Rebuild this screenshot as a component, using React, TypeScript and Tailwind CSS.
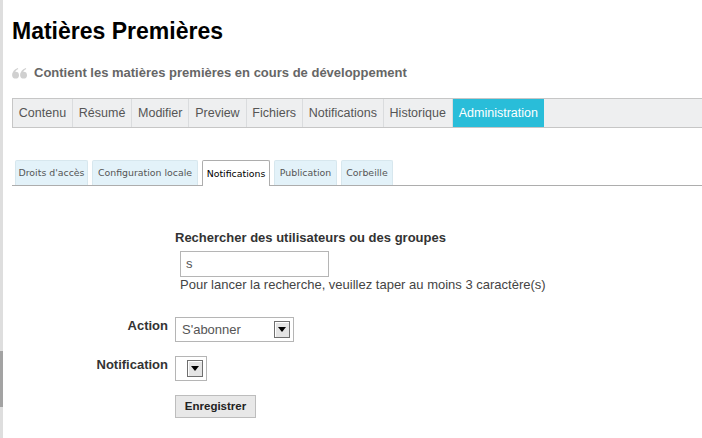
import React from "react";

const navItems = ["Contenu", "Résumé", "Modifier", "Preview", "Fichiers", "Notifications", "Historique"];
const subTabs = [
  { label: "Droits d'accès", w: "w-[73px]" },
  { label: "Configuration locale", w: "w-[106px]" },
  { label: "Notifications", w: "w-[68px]", active: true },
  { label: "Publication", w: "w-[63px]" },
  { label: "Corbeille", w: "w-[52px]" },
];

function SelectArrow() {
  return (
    <div className="flex h-[17px] w-[16px] items-center justify-center border border-[#6f6f6f] bg-[#e4e4e4] shadow-[inset_1px_1px_0_#fff]">
      <svg width="8" height="5" viewBox="0 0 8 5">
        <path d="M0 0 H8 L4 5 Z" fill="#000" />
      </svg>
    </div>
  );
}

function QuoteMark() {
  return (
    <svg width="16" height="11" viewBox="0 0 16 11" className="shrink-0">
      <g fill="#d0d0d0">
        <circle cx="3.6" cy="7.2" r="3.4" />
        <path d="M0.3 7 C0.3 3.8 2.2 1.2 5.8 0 L6.3 1.1 C4.2 2 3.1 3.4 3 5.2 Z" />
        <circle cx="11.6" cy="7.2" r="3.4" />
        <path d="M8.3 7 C8.3 3.8 10.2 1.2 13.8 0 L14.3 1.1 C12.2 2 11.1 3.4 11 5.2 Z" />
      </g>
    </svg>
  );
}

export default function App() {
  return (
    <div className="flex h-[438px] w-[702px] overflow-hidden bg-white" style={{ fontFamily: '"Liberation Sans", Arial, sans-serif' }}>
      <div className="flex w-[3px] shrink-0 flex-col bg-[#dedede]">
        <div className="h-[351px]" />
        <div className="h-[56px] bg-[#a3a3a3]" />
      </div>
      <div className="flex min-w-0 flex-1 flex-col pl-[9px]">
        <h1 className="mt-[17px] text-[23px] font-bold leading-[28px] text-black">Matières Premières</h1>
        <div className="mt-[20px] flex items-center gap-[6px] text-[13px] font-bold leading-[16px] text-[#666]">
          <QuoteMark />
          <span>Contient les matières premières en cours de développement</span>
        </div>
        <div className="mt-[17px] flex h-[30px] border-y border-l border-[#c6c6c6] bg-[#eeeff0] text-[12.5px] text-[#555]">
          {navItems.map((n) => (
            <div key={n} className="flex items-center border-r border-[#dadcde] px-[5.85px]">{n}</div>
          ))}
          <div className="flex items-center bg-[#29bdd9] px-[6px] text-white">Administration</div>
        </div>
        <div
          className="mt-[32px] flex h-[26px] gap-[4px] border-b border-[#adadad] pl-[3px]"
          style={{ fontFamily: '"DejaVu Sans", Verdana, sans-serif' }}
        >
          {subTabs.map((t) => (
            <div
              key={t.label}
              className={
                (t.active
                  ? "relative -mb-px flex items-center justify-center whitespace-nowrap rounded-t-[2px] border border-b-0 border-[#adadad] bg-white pt-[1px] text-[9.4px] text-black "
                  : "flex items-center justify-center whitespace-nowrap rounded-t-[2px] border border-b-0 border-[#d7e7ee] bg-[#e3f2f9] pt-[1px] text-[9.4px] text-[#555] ") + t.w
              }
            >
              {t.label}
            </div>
          ))}
        </div>
        <div className="mt-[44px] grid grid-cols-[156px_1fr] gap-x-[7px] text-[13px] text-[#444]">
          <div />
          <div className="flex flex-col">
            <div className="font-bold leading-[16px] text-[#333]">Rechercher des utilisateurs ou des groupes</div>
            <div className="ml-[5px] mt-[5px] flex h-[26px] w-[149px] items-center border border-[#b5b5b5] px-[5px] text-[#555]">s</div>
            <div className="ml-[5px] leading-[16px] text-[#444]">Pour lancer la recherche, veuillez taper au moins 3 caractère(s)</div>
          </div>
          <div className="mt-[24px] pt-[1px] text-right font-bold leading-[16px] text-[#333]">Action</div>
          <div className="mt-[24px]">
            <div className="flex h-[25px] w-[119px] items-center justify-between border border-[#b5b5b5] pl-[6px] pr-[3px] text-[#555]">
              <span>S'abonner</span>
              <SelectArrow />
            </div>
          </div>
          <div className="mt-[14px] pt-[1px] text-right font-bold leading-[16px] text-[#333]">Notification</div>
          <div className="mt-[14px]">
            <div className="flex h-[25px] w-[32px] items-center justify-end border border-[#b5b5b5] pr-[3px]">
              <SelectArrow />
            </div>
          </div>
          <div />
          <div className="mt-[14px]">
            <button className="h-[23px] w-[81px] border border-[#bdbdbd] bg-[#e8e8e8] text-[11.5px] font-bold text-[#222]">Enregistrer</button>
          </div>
        </div>
      </div>
    </div>
  );
}
